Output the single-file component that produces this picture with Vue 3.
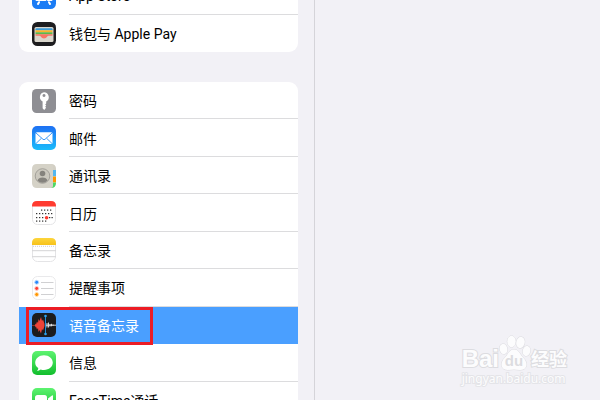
<script setup>
const recent = [
  { id: 'store', label: 'App Store' },
  { id: 'wallet', label: '钱包与 Apple Pay' },
]
const apps = [
  { id: 'keys', label: '密码' },
  { id: 'mail', label: '邮件' },
  { id: 'contacts', label: '通讯录' },
  { id: 'calendar', label: '日历' },
  { id: 'notes', label: '备忘录' },
  { id: 'reminders', label: '提醒事项' },
  { id: 'voice', label: '语音备忘录', selected: true },
  { id: 'messages', label: '信息' },
  { id: 'facetime', label: 'FaceTime通话' },
]
const groups = [recent, apps]
const calendarDots = [
  [10, 9], [13, 9], [16, 9], [19, 9],
  [5, 12.5], [8, 12.5], [11, 12.5], [14, 12.5], [17, 12.5], [20, 12.5],
  [5, 16.5], [8, 16.5], [11, 16.5], [18, 16.5], [20.5, 16.5],
  [5, 20], [8, 20], [11, 20], [14, 20],
]
</script>

<template>
  <div class="settings">
    <nav class="sidebar" aria-label="设置">
      <ul v-for="(group, g) in groups" :key="g" class="group" :class="g === 0 ? 'group-top' : 'group-apps'">
        <li v-for="item in group" :key="item.id" class="row" :class="{ selected: item.selected }">
          <a href="#" class="link">
            <svg class="icon" viewBox="0 0 24 24" aria-hidden="true">
              <g v-if="item.id === 'store'">
                <rect width="24" height="24" rx="5.5" fill="#1b7cf5" />
                <path d="M13.500 5 8 15M10.500 5 16 15M4.500 15h9M16.500 15h3M7 17.200l-1 1.800M17 17.200l1 1.800" stroke="#fff" stroke-width="2" stroke-linecap="round" />
              </g>
              <g v-else-if="item.id === 'wallet'">
                <rect width="24" height="24" rx="5.5" fill="#1d1d1f" />
                <rect x="2.500" y="5" width="19" height="15" rx="1.500" fill="#d9d6cc" />
                <path d="M3.500 8.300V7.300q0-1 1-1h15q1 0 1 1v1z" fill="#3c9bd6" />
                <path d="M3.500 8.300h17v2h-17z" fill="#f8b52b" />
                <path d="M3.500 10.300h17v2h-17z" fill="#5cb84a" />
                <path d="M3.500 12.300h17v1.500H16.500q-1 0-1.400 1-.9 1.700-3.100 1.700t-3.100-1.700q-.4-1-1.400-1H3.500z" fill="#f87563" />
              </g>
              <g v-else-if="item.id === 'keys'">
                <rect width="24" height="24" rx="4.500" fill="#8e8e93" />
                <path fill-rule="evenodd" d="M12 3.200a4.900 4.900 0 0 1 2.200 9.200v2.100l-1 1 1 1.100-1 1.200.9 1-1.900 2.200-1.600-1.800v-6.800A4.900 4.900 0 0 1 12 3.200zm0 1.800a1.500 1.500 0 1 0 .01 0z" fill="#fff" />
              </g>
              <g v-else-if="item.id === 'mail'">
                <rect width="24" height="24" rx="5" fill="url(#mail-fill)" />
                <rect x="3.500" y="6.300" width="17" height="11.700" rx="1.500" fill="#fff" />
                <path d="m4 7 7 6.300q1 .8 2 0L20 7M4 17.500l5.500-5.300M20 17.500l-5.500-5.300" fill="none" stroke="#2a90f5" stroke-width=".9" />
              </g>
              <g v-else-if="item.id === 'contacts'">
                <path d="M17 0h2q5 0 5 5v2h-7z" fill="#d2cfc4" />
                <path d="M20 6h4v6.500h-4z" fill="#52b7f0" />
                <path d="M20 12.500h4v6h-4z" fill="#ff9500" />
                <path d="M19 18.500h5v.5q0 5-5 5z" fill="#4cd964" />
                <path d="M5 0h14q2 0 2 2v20q0 2-2 2H5q-5 0-5-5V5q0-5 5-5z" fill="#d5d2c7" />
                <circle cx="10.500" cy="12" r="7.300" fill="#cbc8be" stroke="#98968f" stroke-width=".8" />
                <circle cx="10.500" cy="9.500" r="2.800" fill="#85837d" />
                <path d="M5.500 16.500q1-3 5-3t5 3q-2 2.300-5 2.300t-5-2.300z" fill="#85837d" />
              </g>
              <g v-else-if="item.id === 'calendar'">
                <rect x=".5" y=".5" width="23" height="23" rx="5" fill="#fff" stroke="#e4e4e6" />
                <path d="M0 5.500V5q0-5 5-5h14q5 0 5 5v.5z" fill="#ff3b30" />
                <rect v-for="([x, y], i) in calendarDots" :key="i" :x="x - 1" :y="y - .5" width="1.300" height="1.200" fill="#333" />
                <circle cx="14.600" cy="16.800" r="1.800" fill="#ff3b30" />
              </g>
              <g v-else-if="item.id === 'notes'">
                <rect x=".5" y=".5" width="23" height="23" rx="5" fill="#fff" stroke="#e4e4e6" />
                <path d="M0 7V5q0-5 5-5h14q5 0 5 5v2z" fill="url(#notes-fill)" />
                <path d="M1 8.300h22" stroke="#c4c4c4" stroke-width=".8" stroke-dasharray="1 1" />
                <path d="M0 12.700h24M0 18.700h24" stroke="#d4d4d6" />
              </g>
              <g v-else-if="item.id === 'reminders'">
                <rect x=".5" y=".5" width="23" height="23" rx="5" fill="#fff" stroke="#e9e9eb" />
                <path d="M9 6.500h12.500M9 12.500h12.500M9 18.500h12.500" stroke="#d0d0d2" />
                <circle cx="4.700" cy="6.300" r="2" fill="#2687fb" stroke="#c3defe" />
                <circle cx="4.700" cy="12.400" r="2" fill="#ff3b30" stroke="#ffd0cd" />
                <circle cx="4.700" cy="18.500" r="2" fill="#ff9500" stroke="#ffe2b8" />
              </g>
              <g v-else-if="item.id === 'voice'">
                <rect width="24" height="24" rx="5" fill="#1c1c1e" />
                <path d="M0 12h3l.5-1.500.5 1 1-3 1 1.500L6.500 6l1 2L9 4l1 4 1-1.500L12.500 11v2L11 17.500 10 16l-1 4.500L7.500 17l-1 2-.5-4-1 1.500-1-3-.5 1L3 12.500H0z" fill="#ee4338" />
                <path d="M15 10v4.500M16.500 9.500v5M18 11v2.500M19.500 10.800v2.500M21 11.500v1.300M14 12.200h10" stroke="#e8e8ea" stroke-width=".9" />
                <path d="M13.500 3v18" stroke="#238bd5" />
                <circle cx="13.500" cy="3" r="1.300" fill="#2ea3ef" />
                <circle cx="13.500" cy="21" r="1.300" fill="#2ea3ef" />
              </g>
              <g v-else-if="item.id === 'messages'">
                <rect width="24" height="24" rx="5" fill="url(#green-fill)" />
                <path d="M12 4.200c5 0 8.800 3.300 8.800 7.400S17 19 12 19q-1.800 0-3.300-.5-1.700 1.300-3.700 1.400 1.300-1.200 1.300-2.800-3.100-2-3.100-5.500c0-4.100 3.800-7.400 8.800-7.400z" fill="#fff" />
              </g>
              <g v-else>
                <rect width="24" height="24" rx="5" fill="url(#green-fill)" />
                <rect x="3" y="7" width="12" height="10.500" rx="2.500" fill="#fff" />
                <path d="m16 10.500 4-3q1-.5 1 .5v8.500q0 1-1 .5l-4-3z" fill="#fff" />
              </g>
            </svg>
            <span class="label">{{ item.label }}</span>
          </a>
          <span v-if="item.selected" class="marker"></span>
        </li>
      </ul>
    </nav>
    <main class="detail">
      <div class="watermark">
        <div class="brand">
          <span class="brand-name">Bai</span>
          <svg class="paw" viewBox="0 0 32 36" aria-hidden="true">
            <g fill="#fcfcfd" stroke="#dcdce0">
              <ellipse cx="4.500" cy="14" rx="3.800" ry="5.200" transform="rotate(-12 4.500 14)" />
              <ellipse cx="12.500" cy="6.500" rx="4.200" ry="5.700" />
              <ellipse cx="21.500" cy="7.500" rx="4.200" ry="5.700" transform="rotate(12 21.500 7.500)" />
              <ellipse cx="27.500" cy="16" rx="3.800" ry="5" transform="rotate(12 27.500 16)" />
              <path d="M15 14.500c5 0 6 5 9 8 6 6 4 12.500-3 12.500-2 0-4-.5-6-.5s-4 .5-6 .5c-7 0-9-6.500-3-12.500 3-3 4-8 9-8z" />
            </g>
            <text x="15" y="31" text-anchor="middle" class="paw-text">du</text>
          </svg>
          <span class="brand-cn">经验</span>
        </div>
        <div class="site">jingyan.baidu.com</div>
      </div>
    </main>
    <svg class="defs" width="0" height="0" aria-hidden="true">
      <linearGradient id="mail-fill" x2="0" y2="1">
        <stop stop-color="#1e70f3" /><stop offset="1" stop-color="#1bbcfb" />
      </linearGradient>
      <linearGradient id="notes-fill" x2="0" y2="1">
        <stop stop-color="#fdd53b" /><stop offset="1" stop-color="#f7c21a" />
      </linearGradient>
      <linearGradient id="green-fill" x2="0" y2="1">
        <stop stop-color="#5df370" /><stop offset="1" stop-color="#12be2d" />
      </linearGradient>
    </svg>
  </div>
</template>

<style>
body {
  background: #f2f1f6;
}
</style>

<style scoped>
.settings {
  display: flex;
  height: 100vh;
  overflow: hidden;
  position: relative;
  background: #f2f1f6;
  color: #000;
  font-family: Roboto, "Noto Sans CJK SC", sans-serif;
  font-size: 14px;
}

.sidebar {
  flex: none;
  width: 52.5%;
  box-sizing: border-box;
  padding: 0 16px 0 19px;
  border-right: 1px solid #d5d4d9;
}

.group {
  display: grid;
  margin: 0;
  padding: 0;
  list-style: none;
  background: #fff;
  border-radius: 9px;
}

.group-top {
  height: 74px;
  margin-top: -22px;
  grid-template-rows: repeat(2, 1fr);
}

.group-apps {
  height: 337px;
  margin-top: 30px;
  grid-template-rows: repeat(9, 1fr);
}

.row {
  position: relative;
  min-height: 0;
}

.link {
  display: flex;
  height: 100%;
  padding-left: 13px;
  gap: 13px;
  align-items: center;
  color: inherit;
  text-decoration: none;
}

.icon {
  flex: none;
  width: 24px;
  height: 24px;
}

.label {
  flex: 1;
  align-self: stretch;
  box-sizing: border-box;
  display: flex;
  align-items: center;
  border-bottom: 1px solid #dcdcde;
  white-space: pre;
}

.row:last-child .label,
.selected .label {
  border-bottom-color: transparent;
}

.selected {
  background: #4a9fff;
  color: #fff;
}

.marker {
  position: absolute;
  z-index: 1;
  top: 0;
  left: 7px;
  width: 127px;
  height: 38px;
  box-sizing: border-box;
  border: 3px solid #ec1c24;
}

.detail {
  flex: 1;
  display: flex;
  align-items: flex-end;
  justify-content: flex-end;
  padding: 0 33px 13px 0;
}

.watermark {
  color: #fcfcfd;
  font-family: "Noto Sans", "Noto Sans CJK SC", sans-serif;
  paint-order: stroke fill;
}

.brand {
  display: flex;
  align-items: flex-end;
  line-height: 24px;
  -webkit-text-stroke: 2px #dcdce0;
}

.brand-name {
  font-family: "Liberation Sans", sans-serif;
  font-size: 24px;
  font-weight: 700;
}

.paw {
  width: 32px;
  height: 36px;
}

.paw-text {
  fill: #dcdce0;
  font-family: "Liberation Sans", sans-serif;
  font-size: 15px;
  font-weight: 700;
  -webkit-text-stroke: 0;
}

.brand-cn {
  font-size: 18px;
  font-weight: 700;
}

.site {
  font-size: 12px;
  line-height: 16px;
  -webkit-text-stroke: 2px #e4e4e8;
}

.defs {
  position: absolute;
}
</style>
